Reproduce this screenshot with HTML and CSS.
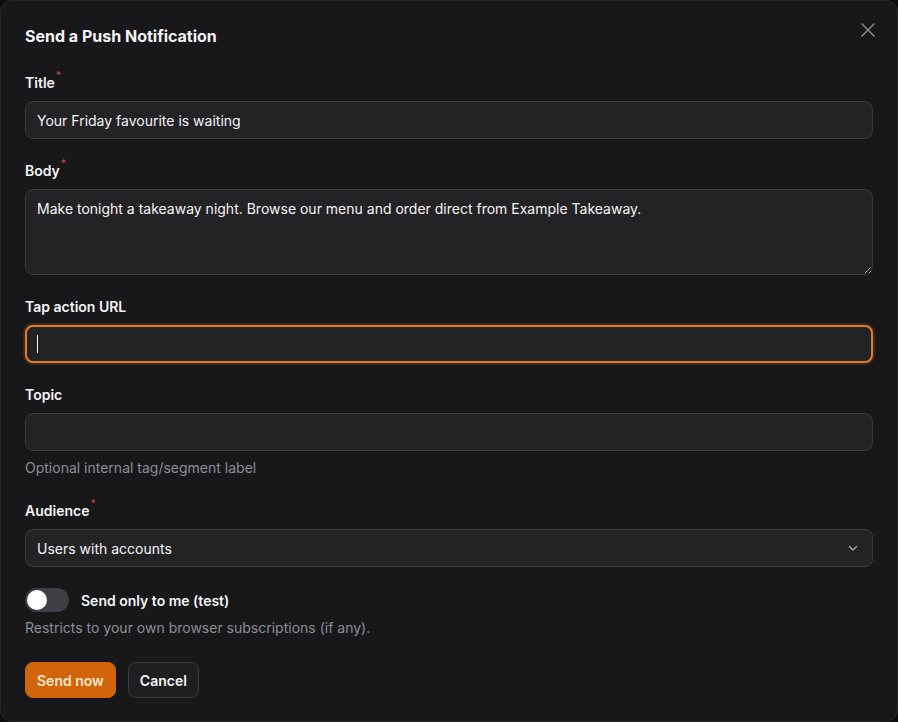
FILE: index.html
```html
<!DOCTYPE html>
<html lang="en">
<head>
<meta charset="utf-8">
<title>Send a Push Notification</title>
<link rel="stylesheet" href="styles.css">
</head>
<body>
<div class="modal">
  <button class="close" aria-label="Close">
    <svg width="16" height="16" viewBox="0 0 16 16" fill="none" stroke="currentColor" stroke-width="1.4" stroke-linecap="round"><path d="M2 2L14 14M14 2L2 14"/></svg>
  </button>
  <h2 class="heading">Send a Push Notification</h2>
  <form class="form">
    <div class="field">
      <label class="label">Title<span class="req">*</span></label>
      <input class="input" type="text" value="Your Friday favourite is waiting">
    </div>
    <div class="field">
      <label class="label">Body<span class="req">*</span></label>
      <textarea class="input textarea">Make tonight a takeaway night. Browse our menu and order direct from Example Takeaway.</textarea>
    </div>
    <div class="field">
      <label class="label">Tap action URL</label>
      <div class="input focus"><span class="caret"></span></div>
    </div>
    <div class="field with-help">
      <label class="label">Topic</label>
      <input class="input" type="text" value="">
      <p class="help">Optional internal tag/segment label</p>
    </div>
    <div class="field">
      <label class="label">Audience<span class="req">*</span></label>
      <div class="input select">
        <span>Users with accounts</span>
        <svg width="12" height="12" viewBox="0 0 12 12" fill="none" stroke="currentColor" stroke-width="1.5" stroke-linecap="round" stroke-linejoin="round"><path d="M2.5 4.5L6 8L9.5 4.5"/></svg>
      </div>
    </div>
    <div class="field toggle-field">
      <div class="toggle-row">
        <span class="toggle"><span class="knob"></span></span>
        <span class="toggle-label">Send only to me (test)</span>
      </div>
      <p class="help">Restricts to your own browser subscriptions (if any).</p>
    </div>
    <div class="actions">
      <button type="button" class="btn primary">Send now</button>
      <button type="button" class="btn secondary">Cancel</button>
    </div>
  </form>
</div>
</body>
</html>
```
FILE: styles.css
```css
* { box-sizing: border-box; }
html, body { margin: 0; height: 100%; background: #0e0e10; }
body {
  font-family: Inter, "Noto Sans", sans-serif;
  color: #f4f4f5;
}
.modal {
  position: relative;
  width: 898px;
  height: 722px;
  background: #18181b;
  border: 1px solid #27272a;
  border-radius: 12px;
  padding: 23px 24px 24px 24px;
}
.close {
  position: absolute;
  top: 20px;
  right: 20px;
  background: none;
  border: 0;
  padding: 0;
  width: 18px;
  height: 18px;
  display: flex;
  align-items: center;
  justify-content: center;
  color: #8f8f97;
  cursor: pointer;
}
.heading {
  margin: 0 0 25px;
  font-size: 16px;
  line-height: 24px;
  height: 24px;
  font-weight: 700;
  color: #f4f4f5;
}
.form { display: flex; flex-direction: column; }
.field { display: flex; flex-direction: column; margin-bottom: 22px; }
.label {
  display: block;
  height: 20px;
  font-size: 14px;
  line-height: 20px;
  font-weight: 600;
  color: #f4f4f5;
  margin-bottom: 8px;
}
.req {
  color: #ef4444;
  font-size: 10px;
  line-height: 1;
  vertical-align: top;
  position: relative;
  top: -3px;
  margin-left: 1px;
  opacity: 0.8;
}
.input {
  display: block;
  width: 100%;
  height: 38px;
  flex: none;
  background: #232326;
  border: 1px solid #3a3a40;
  border-radius: 8px;
  padding: 0 12px 0 11px;
  font-family: Inter, "Noto Sans", sans-serif;
  font-size: 14px;
  color: #f4f4f5;
  outline: none;
}
.textarea {
  height: 86px;
  padding: 9px 12px 10px 11px;
  line-height: 20px;
  resize: vertical;
}
.focus {
  border: 2px solid #e07a2c;
  box-shadow: 0 0 0 2px rgba(224, 122, 44, 0.18);
  display: flex;
  align-items: center;
  padding-left: 10px;
}
.caret {
  width: 1px;
  height: 18px;
  background: #f4f4f5;
}
.select {
  display: flex;
  align-items: center;
  justify-content: space-between;
  padding-right: 13px;
}
.select svg { color: #a1a1aa; }
.help {
  margin: 7px 0 0;
  font-size: 14px;
  line-height: 20px;
  height: 20px;
  color: #8d8d95;
}
.with-help { margin-bottom: 23px; }
.toggle-field { margin-top: -1px; margin-bottom: 24px; }
.toggle-field .help { margin-top: 6px; }
.toggle-row { display: flex; align-items: center; gap: 12px; height: 24px; }
.toggle {
  width: 44px;
  height: 24px;
  border-radius: 12px;
  background: #3f3f46;
  position: relative;
  flex: none;
}
.knob {
  position: absolute;
  left: 2px;
  top: 2px;
  width: 20px;
  height: 20px;
  border-radius: 50%;
  background: #ffffff;
}
.toggle-label { font-size: 14px; font-weight: 600; color: #f4f4f5; }
.actions { display: flex; gap: 12px; }
.btn {
  height: 36px;
  padding: 0 11px;
  border-radius: 8px;
  font-family: Inter, "Noto Sans", sans-serif;
  font-size: 14px;
  font-weight: 600;
  cursor: pointer;
}
.primary {
  background: #d2650c;
  border: 1px solid #d2650c;
  color: #fde7cc;
}
.secondary {
  background: #1f1f22;
  border: 1px solid #3a3a40;
  color: #f4f4f5;
}
```
